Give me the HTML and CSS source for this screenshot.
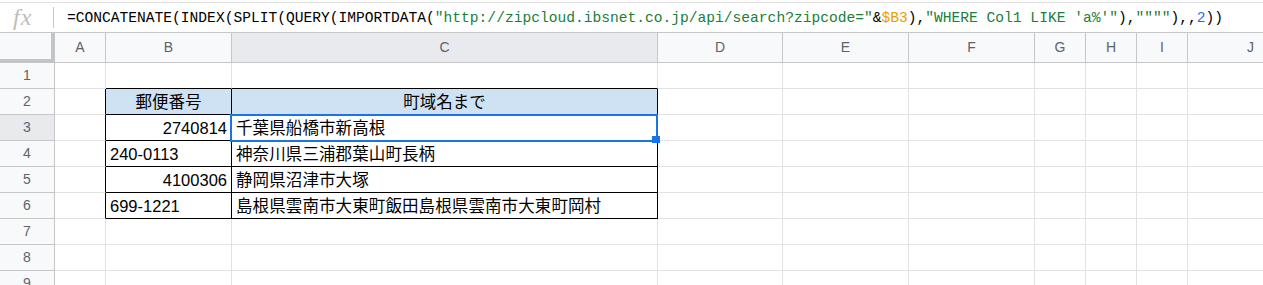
FILE: index.html
```html
<!DOCTYPE html>
<html lang="ja">
<head>
    <meta charset="UTF-8">
    <title>Sheet</title>
    <link rel="stylesheet" href="styles.css">
</head>
<body>
    <div class="formula-bar">
        <div class="fx">fx</div>
        <div class="divider"></div>
        <div class="formula">=CONCATENATE(INDEX(SPLIT(QUERY(IMPORTDATA(<span class="str">"http://zipcloud.ibsnet.co.jp/api/search?zipcode="</span>&amp;<span class="ref">$B3</span>),<span class="str">"WHERE Col1 LIKE 'a%'"</span>),<span class="str">""""</span>),,<span class="lit">2</span>))</div>
    </div>

    <div class="sheet">
        <div class="row head">
            <div class="cell corner"></div>
            <div class="cell ch">A</div>
            <div class="cell ch">B</div>
            <div class="cell ch active">C</div>
            <div class="cell ch">D</div>
            <div class="cell ch">E</div>
            <div class="cell ch">F</div>
            <div class="cell ch">G</div>
            <div class="cell ch">H</div>
            <div class="cell ch">I</div>
            <div class="cell ch">J</div>
        </div>

        <div class="row">
            <div class="cell rn">1</div>
            <div class="cell"></div>
            <div class="cell top"></div>
            <div class="cell top"></div>
            <div class="cell"></div><div class="cell"></div><div class="cell"></div>
            <div class="cell"></div><div class="cell"></div><div class="cell"></div><div class="cell"></div>
        </div>

        <div class="row">
            <div class="cell rn">2</div>
            <div class="cell edge"></div>
            <div class="cell tbl hd">郵便番号</div>
            <div class="cell tbl hd">町域名まで</div>
            <div class="cell"></div><div class="cell"></div><div class="cell"></div>
            <div class="cell"></div><div class="cell"></div><div class="cell"></div><div class="cell"></div>
        </div>

        <div class="row">
            <div class="cell rn active">3</div>
            <div class="cell edge"></div>
            <div class="cell tbl num">2740814</div>
            <div class="cell tbl jp sel">千葉県船橋市新高根</div>
            <div class="cell"></div><div class="cell"></div><div class="cell"></div>
            <div class="cell"></div><div class="cell"></div><div class="cell"></div><div class="cell"></div>
        </div>

        <div class="row">
            <div class="cell rn">4</div>
            <div class="cell edge"></div>
            <div class="cell tbl">240-0113</div>
            <div class="cell tbl jp">神奈川県三浦郡葉山町長柄</div>
            <div class="cell"></div><div class="cell"></div><div class="cell"></div>
            <div class="cell"></div><div class="cell"></div><div class="cell"></div><div class="cell"></div>
        </div>

        <div class="row">
            <div class="cell rn">5</div>
            <div class="cell edge"></div>
            <div class="cell tbl num">4100306</div>
            <div class="cell tbl jp">静岡県沼津市大塚</div>
            <div class="cell"></div><div class="cell"></div><div class="cell"></div>
            <div class="cell"></div><div class="cell"></div><div class="cell"></div><div class="cell"></div>
        </div>

        <div class="row">
            <div class="cell rn">6</div>
            <div class="cell edge"></div>
            <div class="cell tbl">699-1221</div>
            <div class="cell tbl jp">島根県雲南市大東町飯田島根県雲南市大東町岡村</div>
            <div class="cell"></div><div class="cell"></div><div class="cell"></div>
            <div class="cell"></div><div class="cell"></div><div class="cell"></div><div class="cell"></div>
        </div>

        <div class="row">
            <div class="cell rn">7</div>
            <div class="cell"></div><div class="cell"></div><div class="cell"></div>
            <div class="cell"></div><div class="cell"></div><div class="cell"></div>
            <div class="cell"></div><div class="cell"></div><div class="cell"></div><div class="cell"></div>
        </div>

        <div class="row">
            <div class="cell rn">8</div>
            <div class="cell"></div><div class="cell"></div><div class="cell"></div>
            <div class="cell"></div><div class="cell"></div><div class="cell"></div>
            <div class="cell"></div><div class="cell"></div><div class="cell"></div><div class="cell"></div>
        </div>

        <div class="row">
            <div class="cell rn">9</div>
            <div class="cell"></div><div class="cell"></div><div class="cell"></div>
            <div class="cell"></div><div class="cell"></div><div class="cell"></div>
            <div class="cell"></div><div class="cell"></div><div class="cell"></div><div class="cell"></div>
        </div>
    </div>
</body>
</html>
```

FILE: styles.css
```css
html, body {
    margin: 0;
    overflow: hidden;
    background: #fff;
}

body {
    font-family: "Liberation Sans", Arial, "Noto Sans CJK JP", sans-serif;
    color: #000;
}

/* formula bar */

.formula-bar {
    margin-top: 2px;
    height: 29px;
    border-top: 1px solid #e1e1e1;
    border-bottom: 1px solid #c7c7c7;
    display: flex;
    align-items: center;
}

.fx {
    width: 53px;
    padding-left: 13px;
    box-sizing: border-box;
    font: italic 24px "Liberation Serif", serif;
    letter-spacing: 1px;
    color: #bdbdbd;
}

.divider {
    width: 1px;
    height: 21px;
    background: #c7c7c7;
    margin-right: 13px;
}

.formula {
    font: 14.6px "Liberation Mono", monospace;
    white-space: nowrap;
}

.str { color: #188038; }
.ref { color: #f29900; }
.lit { color: #1a73e8; }

/* grid */

.row {
    display: grid;
    grid-template-columns: 55px 51px 126px 426px 125px 126px 126px 51px 51px 51px 126px;
    height: 26px;
}

.row.head {
    height: 30px;
}

.cell {
    box-sizing: border-box;
    border-right: 1px solid #e2e2e2;
    border-bottom: 1px solid #e2e2e2;
    padding: 0 4px 2px;
    display: flex;
    align-items: flex-end;
    font-size: 16.5px;
    line-height: 19px;
    white-space: nowrap;
    overflow: hidden;
}

.ch, .rn {
    background: #f8f9fa;
    border-color: #c7c7c7;
    color: #5f6368;
    font-size: 14px;
    justify-content: center;
    align-items: center;
    padding: 0;
}

.corner {
    background: #f8f9fa;
    border-right: 4px solid #c4c4c4;
    border-bottom: 4px solid #c4c4c4;
}

.active {
    background: #e8eaed;
}

/* bordered table B2:C6 */

.top {
    border-bottom-color: #000;
}

.edge {
    border-right-color: #000;
}

.tbl {
    border-right-color: #000;
    border-bottom-color: #000;
}

.hd {
    background: #cfe2f3;
    justify-content: center;
}

.num {
    justify-content: flex-end;
}

.jp {
    letter-spacing: 0.1px;
}

/* selected cell */

.sel {
    position: relative;
    overflow: visible;
}

.sel::after {
    content: "";
    position: absolute;
    top: -1px;
    left: -2px;
    right: -1px;
    bottom: -2px;
    border: 2px solid #1a73e8;
}

.sel::before {
    content: "";
    position: absolute;
    right: -3px;
    bottom: -3px;
    width: 8px;
    height: 7px;
    background: #1a73e8;
    z-index: 1;
}
```
